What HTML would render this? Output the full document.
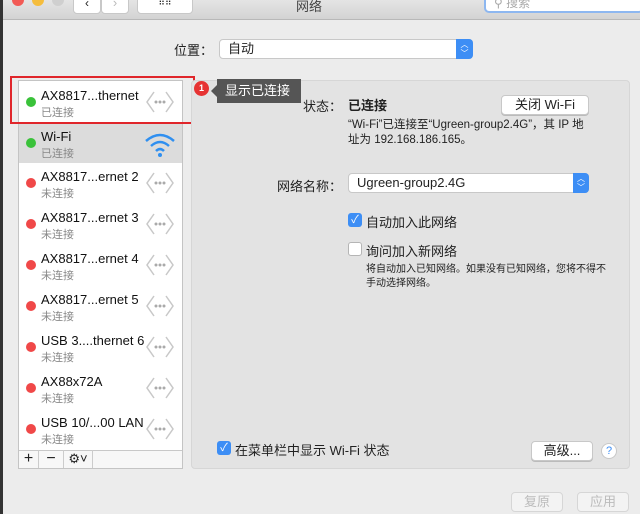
<!DOCTYPE html>
<html><head><meta charset="utf-8"><style>
*{box-sizing:border-box;margin:0;padding:0}
body{width:640px;height:514px;overflow:hidden;background:#ececec;font-family:"Liberation Sans","Noto Sans CJK SC",sans-serif;font-size:13px;color:#222;position:relative}
.abs{position:absolute}
.tb{left:0;top:0;width:640px;height:20px;background:linear-gradient(#e4e4e4,#d3d3d3);border-bottom:1px solid #b8b8b8}
.lb{left:0;top:0;width:3px;height:514px;background:#333}
.list{left:18px;top:80px;width:165px;height:389px;background:#fff;border:1px solid #c4c4c4}
.row{position:absolute;left:0;width:163px;height:41px}
.row .n{position:absolute;left:22px;top:7px;font-size:13px;color:#111;white-space:nowrap}
.row .s{position:absolute;left:22px;top:23px;font-size:11px;color:#888}
.dot{position:absolute;left:7px;top:16px;width:10px;height:10px;border-radius:50%}
.g{background:#3ac23a}.r{background:#f04848}
.ic{position:absolute;left:126px;top:8px}
.panel{left:191px;top:80px;width:439px;height:389px;background:#e3e3e3;border:1px solid #d6d6d6;border-radius:4px}
.btn{background:#fff;border:1px solid #c8c8c8;border-radius:4px;text-align:center;font-size:13px;box-shadow:0 1px 0 #bbb}
.cb{width:14px;height:14px;border-radius:3px}
.cbon{background:#3d8ef5;color:#fff;font-size:11px;text-align:center;line-height:14px}
.cboff{background:#fff;border:1px solid #b5b5b5}
</style></head><body>
<div class="abs tb"></div>
<div class="abs lb"></div>
<div class="abs" style="left:12px;top:-6px;width:12px;height:12px;border-radius:50%;background:#f25a55"></div>
<div class="abs" style="left:32px;top:-6px;width:12px;height:12px;border-radius:50%;background:#f5bd3d"></div>
<div class="abs" style="left:52px;top:-6px;width:12px;height:12px;border-radius:50%;background:#cfcfcf"></div>
<div class="abs btn" style="left:73px;top:-6px;width:28px;height:20px;box-shadow:none;font-size:12px;line-height:16px">&lsaquo;</div>
<div class="abs btn" style="left:101px;top:-6px;width:28px;height:20px;box-shadow:none;color:#bbb;line-height:16px">&rsaquo;</div>
<div class="abs btn" style="left:137px;top:-6px;width:56px;height:20px;box-shadow:none;font-size:9px;line-height:14px">⠿⠿</div>
<div class="abs" style="left:296px;top:-4px;font-size:13px;color:#444">网络</div>
<div class="abs" style="left:484px;top:-6px;width:160px;height:19px;background:#fff;border:2px solid #8db7f0;border-radius:5px;font-size:12px;color:#aaa;padding-left:8px;line-height:14px">⚲ 搜索</div>

<div class="abs" style="left:174px;top:40px">位置：</div>
<div class="abs" style="left:219px;top:39px;width:254px;height:20px;background:#fff;border:1px solid #c8c8c8;border-radius:4px;padding-left:8px;line-height:18px">自动</div>
<div class="abs" style="left:456px;top:39px;width:17px;height:20px;background:#3d8ef5;border-radius:0 4px 4px 0;color:#fff;font-size:8px;text-align:center;line-height:9px;padding-top:1px">︿<br>﹀</div>

<div class="abs list">
<div class="row" style="top:0"><div class="dot g"></div><div class="n">AX8817...thernet</div><div class="s">已连接</div><svg class="ic" width="30" height="26"><path d="M9 3L2 13L9 23M21 3L28 13L21 23" fill="none" stroke="#c8c8c8" stroke-width="1.5"/><circle cx="11" cy="13" r="1.5" fill="#aaa"/><circle cx="15" cy="13" r="1.5" fill="#aaa"/><circle cx="19" cy="13" r="1.5" fill="#aaa"/></svg></div>
<div class="row" style="top:41px;background:#dcdcdc"><div class="dot g"></div><div class="n">Wi-Fi</div><div class="s">已连接</div><svg class="ic" width="34" height="28" style="left:124px"><g fill="none" stroke="#2f8ff0" stroke-width="2.5"><path d="M3 11Q17 -1 31 11"/><path d="M8 16Q17 8 26 16"/><path d="M13 21Q17 17 21 21"/></g><circle cx="17" cy="25" r="2" fill="#2f8ff0"/></svg></div>
</div>
<div class="abs" style="left:19px;top:162px;width:163px">
<div class="row" style="top:0"><div class="dot r"></div><div class="n">AX8817...ernet 2</div><div class="s">未连接</div><svg class="ic" width="30" height="26"><path d="M9 3L2 13L9 23M21 3L28 13L21 23" fill="none" stroke="#c8c8c8" stroke-width="1.5"/><circle cx="11" cy="13" r="1.5" fill="#aaa"/><circle cx="15" cy="13" r="1.5" fill="#aaa"/><circle cx="19" cy="13" r="1.5" fill="#aaa"/></svg></div>
<div class="row" style="top:41px"><div class="dot r"></div><div class="n">AX8817...ernet 3</div><div class="s">未连接</div><svg class="ic" width="30" height="26"><path d="M9 3L2 13L9 23M21 3L28 13L21 23" fill="none" stroke="#c8c8c8" stroke-width="1.5"/><circle cx="11" cy="13" r="1.5" fill="#aaa"/><circle cx="15" cy="13" r="1.5" fill="#aaa"/><circle cx="19" cy="13" r="1.5" fill="#aaa"/></svg></div>
<div class="row" style="top:82px"><div class="dot r"></div><div class="n">AX8817...ernet 4</div><div class="s">未连接</div><svg class="ic" width="30" height="26"><path d="M9 3L2 13L9 23M21 3L28 13L21 23" fill="none" stroke="#c8c8c8" stroke-width="1.5"/><circle cx="11" cy="13" r="1.5" fill="#aaa"/><circle cx="15" cy="13" r="1.5" fill="#aaa"/><circle cx="19" cy="13" r="1.5" fill="#aaa"/></svg></div>
<div class="row" style="top:123px"><div class="dot r"></div><div class="n">AX8817...ernet 5</div><div class="s">未连接</div><svg class="ic" width="30" height="26"><path d="M9 3L2 13L9 23M21 3L28 13L21 23" fill="none" stroke="#c8c8c8" stroke-width="1.5"/><circle cx="11" cy="13" r="1.5" fill="#aaa"/><circle cx="15" cy="13" r="1.5" fill="#aaa"/><circle cx="19" cy="13" r="1.5" fill="#aaa"/></svg></div>
<div class="row" style="top:164px"><div class="dot r"></div><div class="n">USB 3....thernet 6</div><div class="s">未连接</div><svg class="ic" width="30" height="26"><path d="M9 3L2 13L9 23M21 3L28 13L21 23" fill="none" stroke="#c8c8c8" stroke-width="1.5"/><circle cx="11" cy="13" r="1.5" fill="#aaa"/><circle cx="15" cy="13" r="1.5" fill="#aaa"/><circle cx="19" cy="13" r="1.5" fill="#aaa"/></svg></div>
<div class="row" style="top:205px"><div class="dot r"></div><div class="n">AX88x72A</div><div class="s">未连接</div><svg class="ic" width="30" height="26"><path d="M9 3L2 13L9 23M21 3L28 13L21 23" fill="none" stroke="#c8c8c8" stroke-width="1.5"/><circle cx="11" cy="13" r="1.5" fill="#aaa"/><circle cx="15" cy="13" r="1.5" fill="#aaa"/><circle cx="19" cy="13" r="1.5" fill="#aaa"/></svg></div>
<div class="row" style="top:246px"><div class="dot r"></div><div class="n">USB 10/...00 LAN</div><div class="s">未连接</div><svg class="ic" width="30" height="26"><path d="M9 3L2 13L9 23M21 3L28 13L21 23" fill="none" stroke="#c8c8c8" stroke-width="1.5"/><circle cx="11" cy="13" r="1.5" fill="#aaa"/><circle cx="15" cy="13" r="1.5" fill="#aaa"/><circle cx="19" cy="13" r="1.5" fill="#aaa"/></svg></div>
</div>
<div class="abs" style="left:19px;top:450px;width:163px;height:18px;background:#f7f7f7;border-top:1px solid #c8c8c8"></div>
<div class="abs" style="left:19px;top:450px;width:20px;height:18px;border-right:1px solid #ccc;text-align:center;font-size:16px;line-height:17px">+</div>
<div class="abs" style="left:39px;top:450px;width:25px;height:18px;border-right:1px solid #ccc;text-align:center;font-size:16px;line-height:17px">−</div>
<div class="abs" style="left:64px;top:450px;width:29px;height:18px;border-right:1px solid #ccc;text-align:center;font-size:13px;line-height:18px">⚙︎˅</div>

<div class="abs" style="left:10px;top:76px;width:185px;height:48px;border:2px solid #e0262b"></div>

<div class="abs panel"></div>
<div class="abs" style="left:194px;top:81px;width:15px;height:15px;border-radius:50%;background:#e63333;color:#fff;font-size:9px;font-weight:bold;text-align:center;line-height:15px">1</div>
<div class="abs" style="left:217px;top:79px;width:84px;height:24px;background:#555;color:#fff;font-size:13px;padding-left:8px;line-height:23px">显示已连接</div>
<div class="abs" style="left:211px;top:85px;width:0;height:0;border-top:6px solid transparent;border-bottom:6px solid transparent;border-right:6px solid #555"></div>

<div class="abs" style="left:303px;top:96px">状态：</div>
<div class="abs" style="left:348px;top:95px;font-weight:bold;font-size:13px">已连接</div>
<div class="abs btn" style="left:501px;top:95px;width:88px;height:20px;line-height:18px">关闭 Wi-Fi</div>
<div class="abs" style="left:348px;top:118px;font-size:11.5px;line-height:15px;width:243px">“Wi-Fi”已连接至“Ugreen-group2.4G”，其 IP 地址为 192.168.186.165。</div>

<div class="abs" style="left:277px;top:176px">网络名称：</div>
<div class="abs" style="left:348px;top:173px;width:241px;height:20px;background:#fff;border:1px solid #c8c8c8;border-radius:4px;padding-left:8px;line-height:18px">Ugreen-group2.4G</div>
<div class="abs" style="left:573px;top:173px;width:16px;height:20px;background:#3d8ef5;border-radius:0 4px 4px 0;color:#fff;font-size:8px;text-align:center;line-height:9px;padding-top:1px">︿<br>﹀</div>

<div class="abs cb cbon" style="left:348px;top:213px">✓</div>
<div class="abs" style="left:366px;top:212px">自动加入此网络</div>
<div class="abs cb cboff" style="left:348px;top:242px"></div>
<div class="abs" style="left:366px;top:241px">询问加入新网络</div>
<div class="abs" style="left:366px;top:263px;font-size:10px;line-height:14px;width:240px">将自动加入已知网络。如果没有已知网络，您将不得不手动选择网络。</div>

<div class="abs cb cbon" style="left:217px;top:441px">✓</div>
<div class="abs" style="left:235px;top:440px">在菜单栏中显示 Wi-Fi 状态</div>
<div class="abs btn" style="left:531px;top:441px;width:62px;height:20px;line-height:18px">高级...</div>
<div class="abs" style="left:601px;top:443px;width:16px;height:16px;border-radius:50%;background:#fff;border:1px solid #c8c8c8;color:#3d8ef5;font-size:11px;text-align:center;line-height:14px">?</div>

<div class="abs btn" style="left:511px;top:492px;width:52px;height:20px;color:#bbb;line-height:18px;box-shadow:none;background:#f3f3f3;border-color:#d6d6d6">复原</div>
<div class="abs btn" style="left:577px;top:492px;width:52px;height:20px;color:#bbb;line-height:18px;box-shadow:none;background:#f3f3f3;border-color:#d6d6d6">应用</div>
</body></html>
